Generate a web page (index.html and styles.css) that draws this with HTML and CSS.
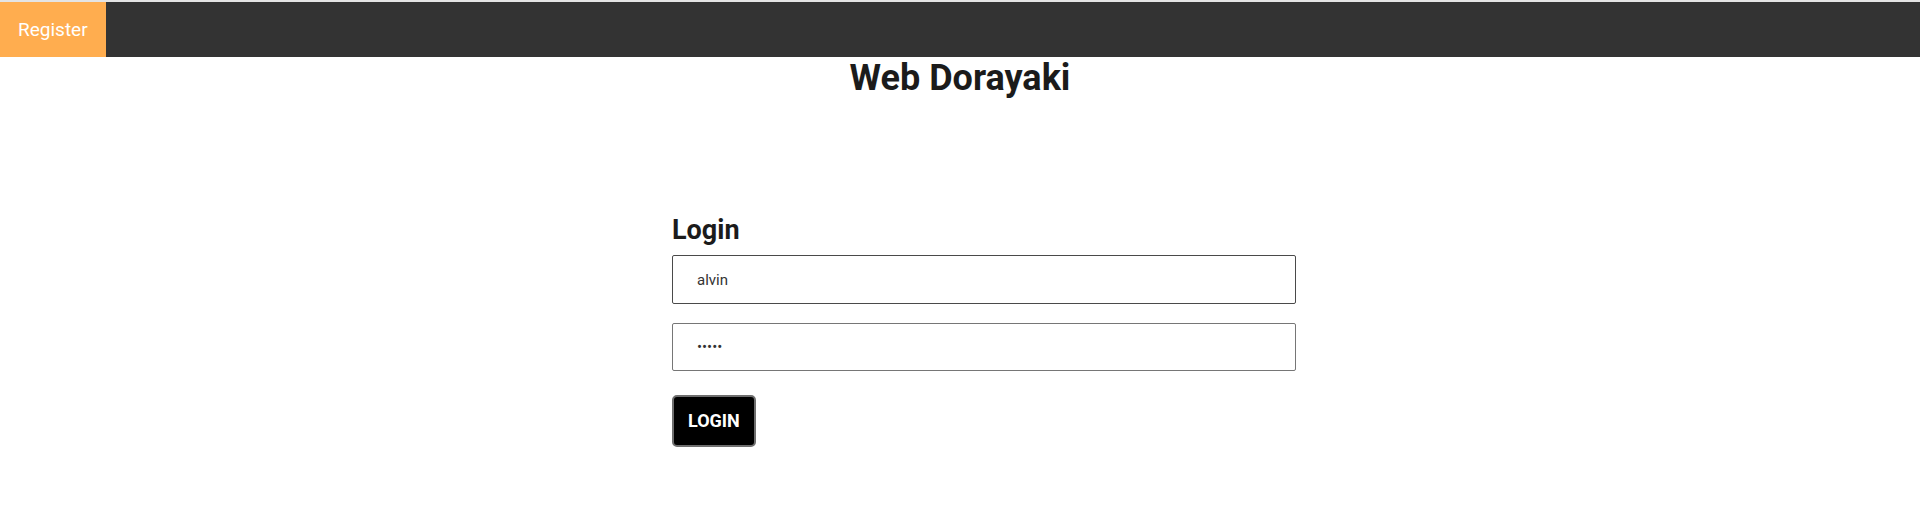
FILE: index.html
```html
<!DOCTYPE html>
<html lang="en">
<head>
<meta charset="utf-8">
<title>Web Dorayaki - Login</title>
<link rel="stylesheet" href="styles.css">
</head>
<body>
  <nav class="navbar">
    <a class="nav-link" href="#">Register</a>
  </nav>
  <h1 class="title">Web Dorayaki</h1>
  <main class="login">
    <h2 class="login-heading">Login</h2>
    <form class="login-form">
      <input class="field field-user" type="text" value="alvin">
      <input class="field field-pass" type="password" value="12345" autofocus>
      <button class="btn" type="button">LOGIN</button>
    </form>
  </main>
</body>
</html>
```

FILE: styles.css
```css
html, body {
  margin: 0;
  padding: 0;
  background: #ffffff;
}

body {
  font-family: Roboto, "Liberation Sans", Arial, sans-serif;
  color: #1b1b1b;
  border-top: 2px solid #e4e4e4;
}

.navbar {
  display: flex;
  height: 55px;
  background: #333333;
}

.nav-link {
  display: flex;
  align-items: center;
  padding: 0 18px;
  background: #ffad4f;
  color: #ffffff;
  font-size: 19px;
  text-decoration: none;
}

.title {
  margin: 0;
  text-align: center;
  font-size: 36px;
  font-weight: 700;
  line-height: normal;
  color: #1b1b1b;
}

.login {
  width: 576px;
  margin: 115px auto 0;
}

.login-heading {
  margin: 0 0 9px;
  font-size: 27px;
  font-weight: 700;
  line-height: normal;
  color: #1b1b1b;
}

.login-form {
  display: flex;
  flex-direction: column;
  align-items: flex-start;
}

.field {
  box-sizing: border-box;
  width: 624px;
  padding: 0 24px;
  border: 1px solid #767676;
  border-radius: 2px;
  font-family: Roboto, "Liberation Sans", Arial, sans-serif;
  font-size: 15px;
  color: #333333;
  background: #ffffff;
  outline: none;
  caret-color: #000000;
}

.field-user {
  height: 49px;
  border-color: #4a4a4a;
  margin-bottom: 19px;
}

.field-pass {
  height: 48px;
  margin-bottom: 24px;
}

.btn {
  padding: 14px 14px;
  border: 2px solid #6e6e6e;
  border-radius: 5px;
  background: #000000;
  color: #ffffff;
  font-family: Roboto, "Liberation Sans", Arial, sans-serif;
  font-size: 18px;
  font-weight: 700;
  line-height: 20px;
  cursor: pointer;
}
```
